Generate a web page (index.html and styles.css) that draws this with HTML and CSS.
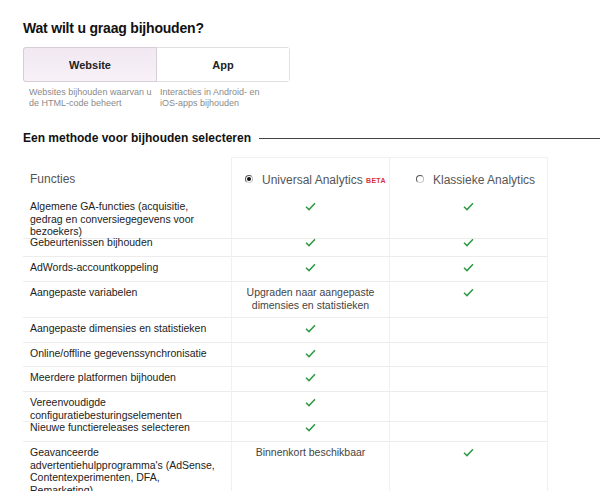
FILE: index.html
```html
<!DOCTYPE html>
<html>
<head>
  <title>Bijhouden</title>
  <link rel="stylesheet" href="styles.css">
</head>
<body>
  <div class="page">
    <h1 class="heading">Wat wilt u graag bijhouden?</h1>
    <div class="toggle">
      <button class="toggle-btn active">Website</button>
      <button class="toggle-btn">App</button>
    </div>
    <div class="descs">
      <p class="desc web">Websites bijhouden waarvan u de HTML-code beheert</p>
      <p class="desc app">Interacties in Android- en iOS-apps bijhouden</p>
    </div>
    <div class="section">
      <h2 class="subheading">Een methode voor bijhouden selecteren</h2>
      <div class="rule"></div>
    </div>

    <div class="table">
      <div class="row head">
        <div class="cell label">Functies</div>
        <div class="cell opt"><span class="radio on"></span>Universal Analytics <span class="beta">BETA</span></div>
        <div class="cell opt"><span class="radio"></span>Klassieke Analytics</div>
      </div>
      <div class="row h35">
        <div class="cell label">Algemene GA-functies (acquisitie, gedrag en conversiegegevens voor bezoekers)</div>
        <div class="cell opt"><svg class="check" viewBox="0 0 11 9"><path d="M1 4.8 L4 7.6 L10 1.2"/></svg></div>
        <div class="cell opt"><svg class="check" viewBox="0 0 11 9"><path d="M1 4.8 L4 7.6 L10 1.2"/></svg></div>
      </div>
      <div class="row">
        <div class="cell label">Gebeurtenissen bijhouden</div>
        <div class="cell opt"><svg class="check" viewBox="0 0 11 9"><path d="M1 4.8 L4 7.6 L10 1.2"/></svg></div>
        <div class="cell opt"><svg class="check" viewBox="0 0 11 9"><path d="M1 4.8 L4 7.6 L10 1.2"/></svg></div>
      </div>
      <div class="row">
        <div class="cell label">AdWords-accountkoppeling</div>
        <div class="cell opt"><svg class="check" viewBox="0 0 11 9"><path d="M1 4.8 L4 7.6 L10 1.2"/></svg></div>
        <div class="cell opt"><svg class="check" viewBox="0 0 11 9"><path d="M1 4.8 L4 7.6 L10 1.2"/></svg></div>
      </div>
      <div class="row h36">
        <div class="cell label">Aangepaste variabelen</div>
        <div class="cell opt note">Upgraden naar aangepaste dimensies en statistieken</div>
        <div class="cell opt"><svg class="check" viewBox="0 0 11 9"><path d="M1 4.8 L4 7.6 L10 1.2"/></svg></div>
      </div>
      <div class="row">
        <div class="cell label">Aangepaste dimensies en statistieken</div>
        <div class="cell opt"><svg class="check" viewBox="0 0 11 9"><path d="M1 4.8 L4 7.6 L10 1.2"/></svg></div>
        <div class="cell opt"></div>
      </div>
      <div class="row h24">
        <div class="cell label">Online/offline gegevenssynchronisatie</div>
        <div class="cell opt"><svg class="check" viewBox="0 0 11 9"><path d="M1 4.8 L4 7.6 L10 1.2"/></svg></div>
        <div class="cell opt"></div>
      </div>
      <div class="row">
        <div class="cell label">Meerdere platformen bijhouden</div>
        <div class="cell opt"><svg class="check" viewBox="0 0 11 9"><path d="M1 4.8 L4 7.6 L10 1.2"/></svg></div>
        <div class="cell opt"></div>
      </div>
      <div class="row">
        <div class="cell label">Vereenvoudigde configuratiebesturingselementen</div>
        <div class="cell opt"><svg class="check" viewBox="0 0 11 9"><path d="M1 4.8 L4 7.6 L10 1.2"/></svg></div>
        <div class="cell opt"></div>
      </div>
      <div class="row">
        <div class="cell label">Nieuwe functiereleases selecteren</div>
        <div class="cell opt"><svg class="check" viewBox="0 0 11 9"><path d="M1 4.8 L4 7.6 L10 1.2"/></svg></div>
        <div class="cell opt"></div>
      </div>
      <div class="row h49 last">
        <div class="cell label nowrap">Geavanceerde<br>advertentiehulpprogramma's (AdSense,<br>Contentexperimenten, DFA,<br>Remarketing)</div>
        <div class="cell opt note">Binnenkort beschikbaar</div>
        <div class="cell opt"><svg class="check" viewBox="0 0 11 9"><path d="M1 4.8 L4 7.6 L10 1.2"/></svg></div>
      </div>
    </div>
  </div>
</body>
</html>
```

FILE: styles.css
```css
body, html {
  margin: 0;
  padding: 0;
  background-color: white;
  font-family: "Liberation Sans", Arial, sans-serif;
  overflow: hidden;
}
.page {
  padding: 18px 0 0 23px;
}
.heading {
  margin: 0;
  font-size: 14px;
  letter-spacing: -0.2px;
  line-height: 20px;
  color: #111;
}
.toggle {
  display: flex;
  width: 267px;
  height: 35px;
  margin-top: 9px;
  border: 1px solid #e0e0e0;
  border-radius: 3px;
  box-sizing: border-box;
}
.toggle-btn {
  flex: 1;
  border: none;
  background: white;
  font-family: inherit;
  font-size: 11px;
  font-weight: bold;
  color: #222;
  padding: 0;
  cursor: pointer;
}
.toggle-btn.active {
  background: linear-gradient(#f1e8f1, #f8f1f8);
  border: 1px solid #d6cdd6;
  margin: -1px 0 -1px -1px;
  border-radius: 3px 0 0 3px;
}
.descs {
  display: flex;
  padding-left: 6px;
  margin-top: 5px;
}
.desc {
  margin: 0;
  font-size: 9px;
  line-height: 11px;
  color: #8a8a8a;
}
.desc.web {
  width: 125px;
  margin-right: 6px;
}
.desc.app {
  width: 100px;
}
.section {
  display: flex;
  align-items: center;
  margin-top: 22px;
}
.subheading {
  margin: 0;
  font-size: 12px;
  line-height: 14px;
  color: #111;
  white-space: nowrap;
}
.rule {
  flex: 1;
  height: 1px;
  margin-left: 8px;
  margin-top: 1px;
  background: #444;
}
.table {
  margin-top: 12px;
  width: 526px;
}
.row {
  display: grid;
  grid-template-columns: 208px 158px 159px;
  height: 25px;
}
.row.h35 { height: 35px; }
.row.h36 { height: 36px; }
.row.h24 { height: 24px; }
.row.h49 { height: 49px; }
.row.head { height: 40px; }
.cell {
  box-sizing: border-box;
  padding-top: 4px;
  font-size: 10.5px;
  line-height: 12.5px;
  color: #222;
  border-bottom: 1px solid #ececec;
}
.label {
  padding-left: 7px;
  padding-right: 13px;
}
.nowrap {
  white-space: nowrap;
}
.opt {
  text-align: center;
  border-left: 1px solid #f1f1f1;
}
.opt:last-child {
  border-right: 1px solid #f1f1f1;
}
.row.head .cell {
  border-bottom: none;
  padding-top: 15px;
  font-size: 12px;
  line-height: 14px;
  color: #555;
}
.row.head .opt {
  border-top: 1px solid #f1f1f1;
  text-align: left;
  padding-left: 13px;
}
.row.head .opt:last-child {
  padding-left: 26px;
}
.row.h35 .cell {
  padding-top: 3px;
}
.row.last .label {
  border-bottom: none;
}
.row.last .opt {
  border-bottom: 1px solid #e4e4e4;
  box-shadow: 0 1px 1px #f0f0f0;
}
.note {
  color: #444;
  padding-left: 14px;
  padding-right: 14px;
}
.check {
  width: 11px;
  height: 9px;
  margin-top: 2px;
  fill: none;
  stroke: #2f9a45;
  stroke-width: 1.5;
}
.beta {
  color: #d9333f;
  font-size: 7px;
  font-weight: bold;
  letter-spacing: 0.3px;
  vertical-align: 1px;
}
.radio {
  display: inline-block;
  width: 6px;
  height: 6px;
  border: 1px solid #555;
  border-right-color: #bbb;
  border-bottom-color: #ccc;
  border-radius: 50%;
  margin-right: 9px;
  vertical-align: 1px;
  position: relative;
}
.radio.on::after {
  content: "";
  position: absolute;
  left: 1px;
  top: 1px;
  width: 4px;
  height: 4px;
  border-radius: 50%;
  background: #111;
}
```
